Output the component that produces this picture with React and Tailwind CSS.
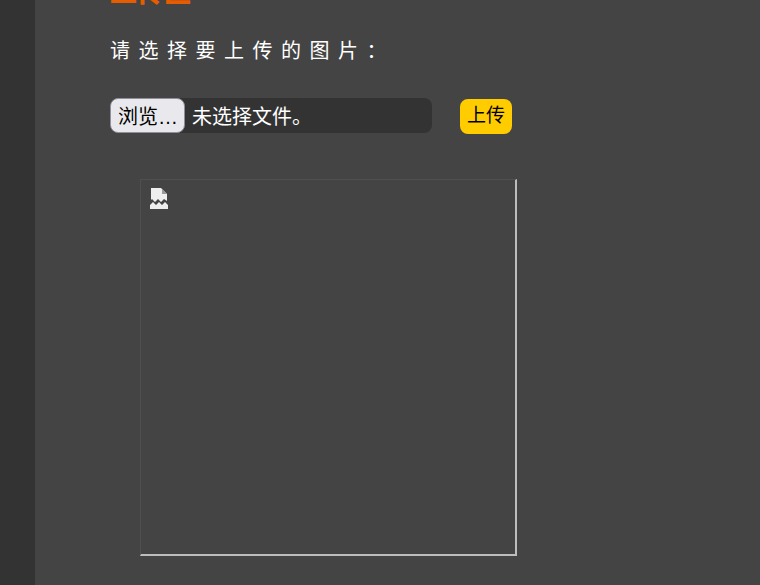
export default function App() {
  return (
    <div className="h-screen w-full overflow-hidden flex bg-[#444444] font-['Liberation_Sans','Noto_Sans_CJK_SC',sans-serif]">
      {/* left rail */}
      <div className="w-[35px] shrink-0 bg-[#333333]"></div>

      <div className="pl-[75px] flex-1 min-w-0">
        <h1 className="mt-[-24px] h-[36px] text-[27px] leading-[34px] font-black text-[#e65c00]">上传区</h1>

        <p className="mt-[24px] text-[20px] leading-[30px] tracking-[8.5px] text-white">请选择要上传的图片：</p>

        <div className="mt-[32px] flex items-start">
          <div className="w-[322px] h-[35px] flex items-center bg-[#333333] rounded-lg text-[20px] text-white">
            <button className="h-[35px] w-[75px] shrink-0 pl-px pt-[2px] bg-[#e9e9ed] border border-[#8f8f9d] rounded-lg text-[20px] text-black">浏览…</button>
            <span className="ml-[7px] pt-[2px]">未选择文件。</span>
          </div>
          <button className="ml-[28px] mt-px h-[35px] w-[52px] bg-[#ffcc00] rounded-lg text-[19px] text-black">上传</button>
        </div>

        <div className="mt-[45px] ml-[30px] w-[377px] h-[377px] border border-r-2 border-b-2 border-t-[#4f4f4f] border-l-[#4f4f4f] border-r-[#bdbdbd] border-b-[#bdbdbd] pl-[9px] pt-[8px]">
          <svg width="18" height="21" viewBox="0 0 18 21" className="block" aria-hidden="true">
            <path d="M1 0H11L17 6V13L14 11L11 14L8 11L5 14L2 11L1 12Z" fill="#eeeeee" />
            <path d="M12 1L17 6H12Z" fill="#9a9a9a" />
            <path d="M0 17L3 14L6 17L9 14L12 17L15 14L18 17V21H0Z" fill="#eeeeee" />
          </svg>
        </div>
      </div>
    </div>
  );
}
